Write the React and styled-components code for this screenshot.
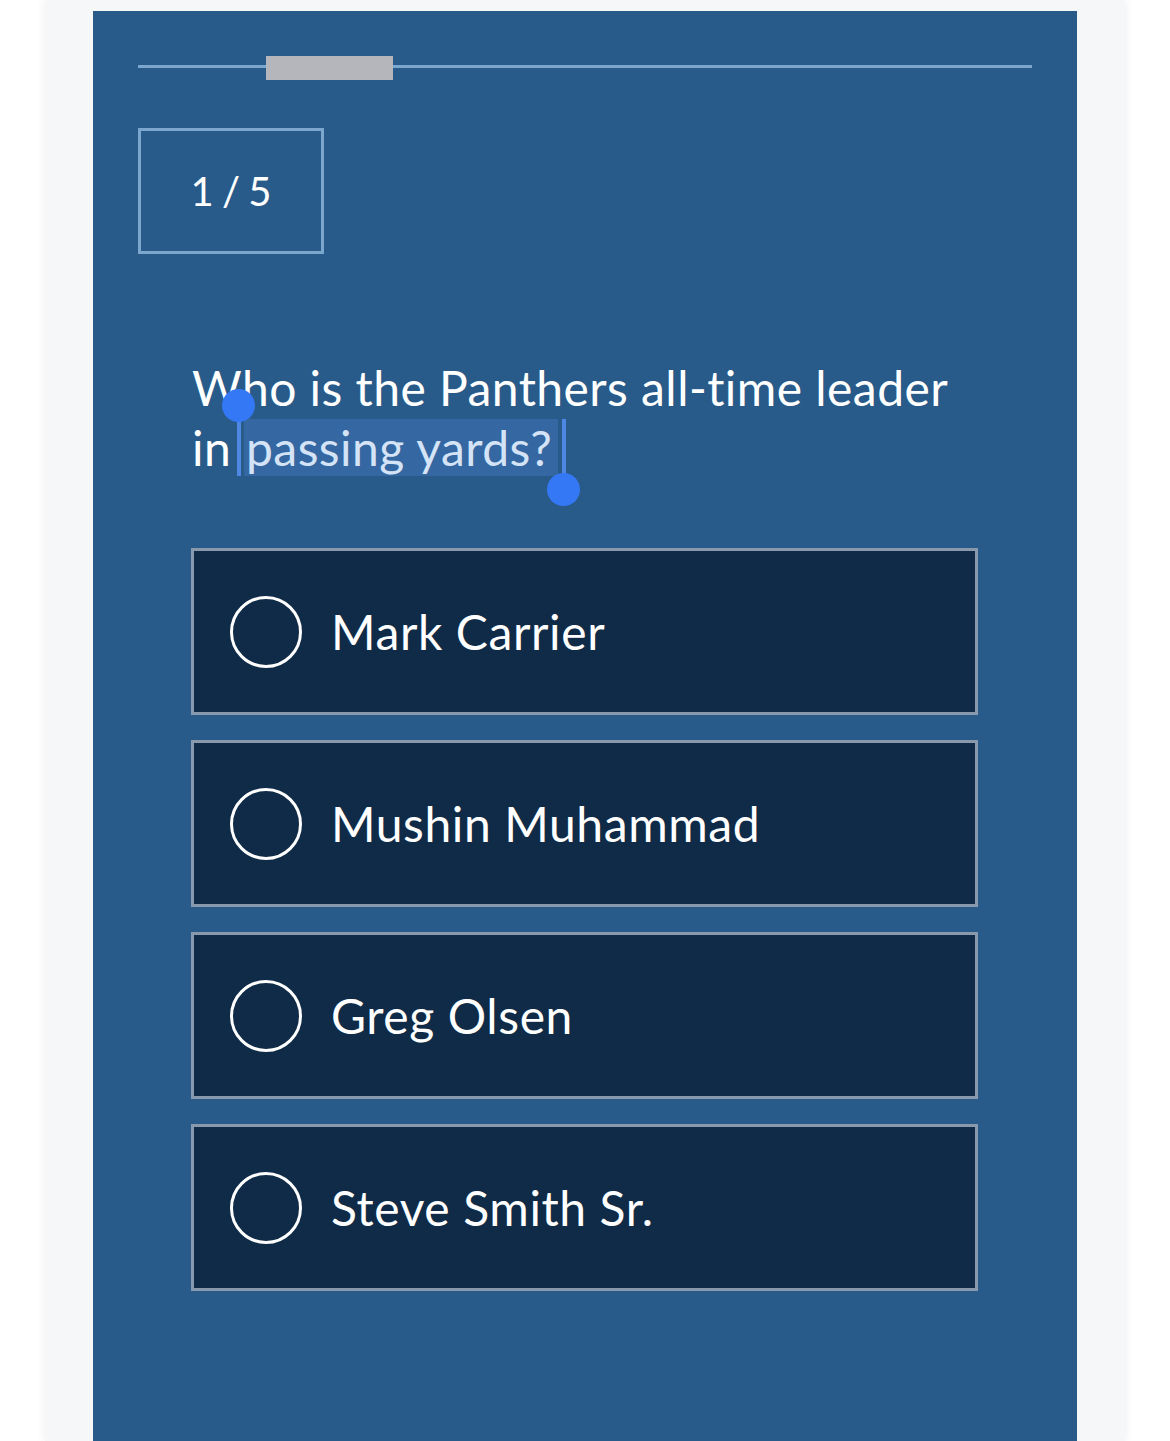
import React from "react"
import styled, { createGlobalStyle } from "styled-components"

const GlobalStyle = createGlobalStyle`
    body {
        margin: 0;
        background: #ffffff;
        font-family: Lato, "Noto Sans", sans-serif;
        font-variant-ligatures: none;
    }
`

const Shell = styled.div`
    width: 1080px;
    min-height: 1441px;
    margin: 0 45px;
    padding: 11px 48px 0;
    box-sizing: border-box;
    background: #f6f7f9;
    box-shadow: 0 0 10px rgba(0, 0, 0, 0.07);
`

const Card = styled.div`
    min-height: 1430px;
    padding: 45px 45px 0;
    box-sizing: border-box;
    background: #285b8a;
    color: #ffffff;
`

const Progress = styled.div`
    position: relative;
    height: 24px;
    display: flex;
    align-items: center;

    &::before {
        content: "";
        position: absolute;
        left: 0;
        right: 0;
        top: 9px;
        height: 3px;
        background: #7ba7cf;
    }
`

const Thumb = styled.div`
    position: relative;
    height: 24px;
    width: ${p => p.$width}px;
    margin-left: ${p => p.$offset}px;
    background: #b4b6bb;
`

const Counter = styled.div`
    width: 186px;
    height: 126px;
    margin-top: 48px;
    box-sizing: border-box;
    border: 3px solid #7ba7cf;
    display: flex;
    align-items: center;
    justify-content: center;
    font-size: 40px;
    word-spacing: -2px;
`

const Question = styled.h2`
    max-width: 780px;
    margin: 104px 0 0 54px;
    font-size: 48px;
    font-weight: 400;
    line-height: 60px;
    letter-spacing: 0.45px;
`

const Selection = styled.span`
    position: relative;
    background: #3567a2;
    color: #d4e3f6;
    padding: 0 6px 0 2px;
`

const Caret = styled.span`
    position: absolute;
    top: 0;
    bottom: 0;
    width: 4px;
    background: #4f88e2;
    ${p => (p.$end ? "right: -8px;" : "left: -7px;")}

    &::after {
        content: "";
        position: absolute;
        left: -15px;
        width: 33px;
        height: 33px;
        border-radius: 50%;
        background: #3478f6;
        ${p => (p.$end ? "bottom: -30px;" : "top: -30px;")}
    }
`

const Options = styled.div`
    margin: 70px 54px 0 53px;
    display: flex;
    flex-direction: column;
    gap: 25px;
`

const Option = styled.label`
    height: 167px;
    box-sizing: border-box;
    border: 3px solid #8899ad;
    background: #0f2b47;
    display: flex;
    align-items: center;
    padding-left: 36px;
    gap: 29px;
    font-size: 48px;
    letter-spacing: 0.6px;
    cursor: pointer;
`

const Radio = styled.span`
    width: 72px;
    height: 72px;
    box-sizing: border-box;
    border: 3px solid #ffffff;
    border-radius: 50%;
    flex-shrink: 0;
`

const answers = ["Mark Carrier", "Mushin Muhammad", "Greg Olsen", "Steve Smith Sr."]

export default function App() {
    return (
        <>
            <GlobalStyle />
            <Shell>
                <Card>
                    <Progress>
                        <Thumb $offset={128} $width={127} />
                    </Progress>
                    <Counter>1 / 5</Counter>
                    <Question>
                        Who is the Panthers all-time leader in{" "}
                        <Selection>
                            <Caret />
                            passing yards?
                            <Caret $end />
                        </Selection>
                    </Question>
                    <Options>
                        {answers.map(a => (
                            <Option key={a}>
                                <Radio />
                                {a}
                            </Option>
                        ))}
                    </Options>
                </Card>
            </Shell>
        </>
    )
}
